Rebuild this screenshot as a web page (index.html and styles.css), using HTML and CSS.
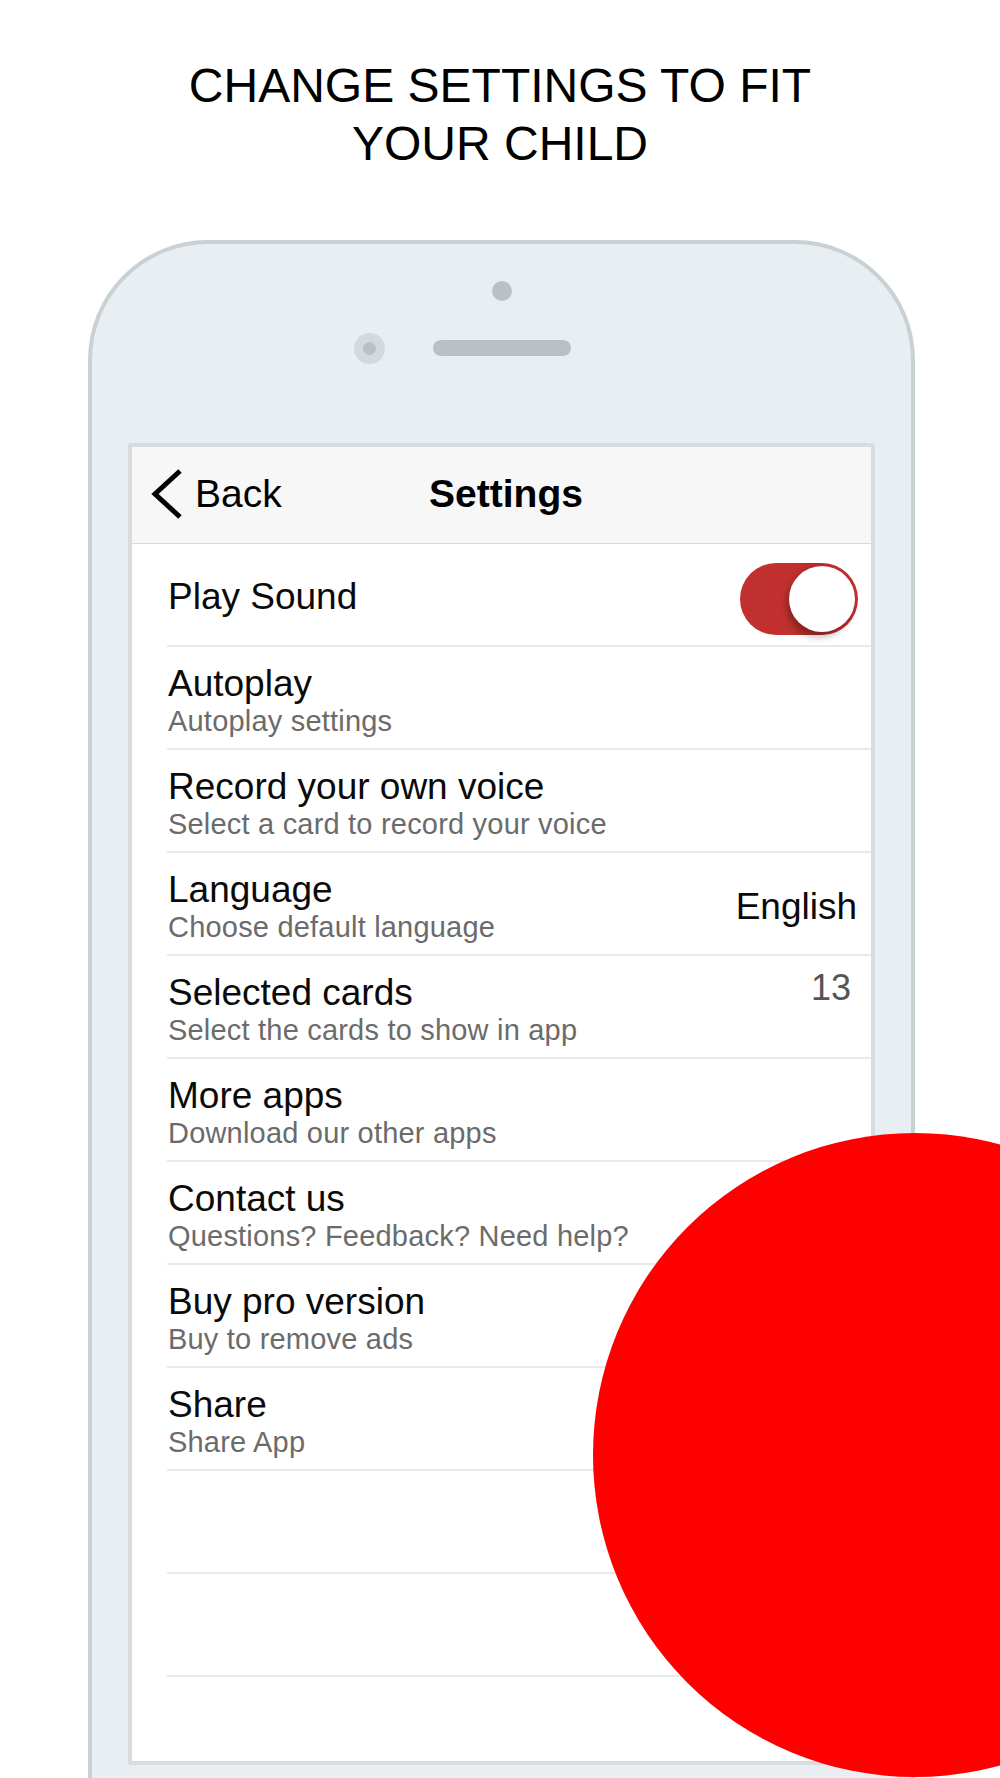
FILE: index.html
```html
<!DOCTYPE html>
<html lang="en">
<head>
<meta charset="utf-8">
<title>Settings</title>
<link rel="stylesheet" href="styles.css">
</head>
<body>
<div class="page">
  <h1 class="headline">CHANGE SETTINGS TO FIT<br>YOUR CHILD</h1>
  <div class="phone">
    <div class="sensor"></div>
    <div class="earpiece-row">
      <div class="camera"><div class="lens"></div></div>
      <div class="speaker"></div>
      <div></div>
    </div>
    <div class="screen">
      <div class="navbar">
        <div class="back">
          <svg class="chevron" width="34" height="52" viewBox="0 0 34 52"><path d="M30 3 L5 26 L30 49" fill="none" stroke="#000" stroke-width="5"/></svg>
          <span>Back</span>
        </div>
        <div class="nav-title">Settings</div>
        <div></div>
      </div>
      <ul class="list">
        <li class="row">
          <div class="texts single"><div class="title">Play Sound</div></div>
          <div class="toggle"><div class="knob"></div></div>
        </li>
        <li class="row">
          <div class="texts"><div class="title">Autoplay</div><div class="sub">Autoplay settings</div></div>
        </li>
        <li class="row">
          <div class="texts"><div class="title">Record your own voice</div><div class="sub">Select a card to record your voice</div></div>
        </li>
        <li class="row">
          <div class="texts"><div class="title">Language</div><div class="sub">Choose default language</div></div>
          <div class="value">English</div>
        </li>
        <li class="row">
          <div class="texts"><div class="title">Selected cards</div><div class="sub">Select the cards to show in app</div></div>
          <div class="count">13</div>
        </li>
        <li class="row">
          <div class="texts"><div class="title">More apps</div><div class="sub">Download our other apps</div></div>
        </li>
        <li class="row">
          <div class="texts"><div class="title">Contact us</div><div class="sub">Questions? Feedback? Need help?</div></div>
        </li>
        <li class="row">
          <div class="texts"><div class="title">Buy pro version</div><div class="sub">Buy to remove ads</div></div>
        </li>
        <li class="row">
          <div class="texts"><div class="title">Share</div><div class="sub">Share App</div></div>
        </li>
        <li class="row"></li>
        <li class="row"></li>
      </ul>
    </div>
  </div>
  <div class="red-dot"></div>
</div>
</body>
</html>
```

FILE: styles.css
```css
html, body {
  margin: 0;
  padding: 0;
  background: #ffffff;
  overflow: hidden;
}

.page {
  position: relative;
  width: 1000px;
  height: 1778px;
  overflow: hidden;
  font-family: "Liberation Sans", Arial, sans-serif;
  color: #000;
}

.headline {
  margin: 0;
  padding-top: 57px;
  font-weight: 400;
  font-size: 48px;
  line-height: 58px;
  text-align: center;
  color: #000;
}

.phone {
  box-sizing: border-box;
  margin: 67px 0 0 88px;
  width: 827px;
  height: 1600px;
  border: 4px solid #c9d1d5;
  border-bottom: none;
  border-radius: 120px 120px 0 0;
  background: #e8eef1;
  padding: 0 36px;
}

.sensor {
  width: 20px;
  height: 20px;
  border-radius: 50%;
  background: #b9c1c5;
  margin: 37px auto 0;
}

.earpiece-row {
  margin-top: 31px;
  height: 32px;
  display: grid;
  grid-template-columns: 1fr auto 1fr;
  align-items: center;
}

.camera {
  justify-self: end;
  margin-right: 48px;
  width: 31px;
  height: 31px;
  border-radius: 50%;
  background: #d3dadd;
  display: flex;
  align-items: center;
  justify-content: center;
}

.lens {
  width: 13px;
  height: 13px;
  border-radius: 50%;
  background: #b9c1c5;
}

.speaker {
  width: 138px;
  height: 16px;
  border-radius: 8px;
  background: #b9c1c5;
}

.screen {
  box-sizing: border-box;
  margin-top: 79px;
  width: 747px;
  height: 1322px;
  border: 4px solid #d6dce0;
  border-radius: 3px;
  background: #ffffff;
  overflow: hidden;
}

.navbar {
  box-sizing: border-box;
  height: 97px;
  padding-bottom: 4px;
  border-bottom: 1px solid #dadada;
  background: #f7f7f7;
  display: grid;
  grid-template-columns: 1fr auto 1fr;
  align-items: center;
}

.back {
  display: flex;
  align-items: center;
  padding-left: 18px;
  font-size: 39px;
  line-height: 39px;
}

.chevron {
  display: block;
  margin-top: 2px;
  margin-right: 11px;
}

.nav-title {
  font-size: 39px;
  line-height: 39px;
  font-weight: 700;
  margin-left: 9px;
}

.list {
  list-style: none;
  margin: 0 0 0 35px;
  padding: 0;
}

.row {
  box-sizing: border-box;
  height: 103px;
  border-bottom: 2px solid #e9e9e9;
  display: flex;
  align-items: flex-start;
  padding-right: 14px;
}

.texts {
  flex: 1;
  margin-left: 1px;
  padding-top: 18px;
}

.texts.single {
  align-self: center;
  padding-top: 3px;
}

.title {
  font-size: 37px;
  line-height: 37px;
  color: #0a0a0a;
  white-space: nowrap;
}

.sub {
  margin-top: 5px;
  font-size: 29px;
  line-height: 29px;
  color: #6b6b6b;
  letter-spacing: 0.2px;
  white-space: nowrap;
}

.value {
  align-self: center;
  margin-top: 6px;
  font-size: 37px;
  line-height: 37px;
  color: #0a0a0a;
}

.count {
  margin-top: 14px;
  margin-right: 6px;
  font-size: 36px;
  line-height: 36px;
  color: #555555;
}

.toggle {
  align-self: center;
  margin-top: 9px;
  margin-right: -1px;
  box-sizing: border-box;
  width: 118px;
  height: 72px;
  border-radius: 36px;
  background: linear-gradient(90deg, #bf302e 0%, #c2312f 40%, #b52c2a 62%, #c0312f 100%);
  padding: 3px;
  display: flex;
  justify-content: flex-end;
}

.knob {
  width: 66px;
  height: 66px;
  border-radius: 50%;
  background: #ffffff;
  box-shadow: -3px 5px 7px rgba(0, 0, 0, 0.28);
}

.red-dot {
  position: absolute;
  left: 593px;
  top: 1133px;
  width: 644px;
  height: 644px;
  border-radius: 50%;
  background: #fe0000;
}
```
